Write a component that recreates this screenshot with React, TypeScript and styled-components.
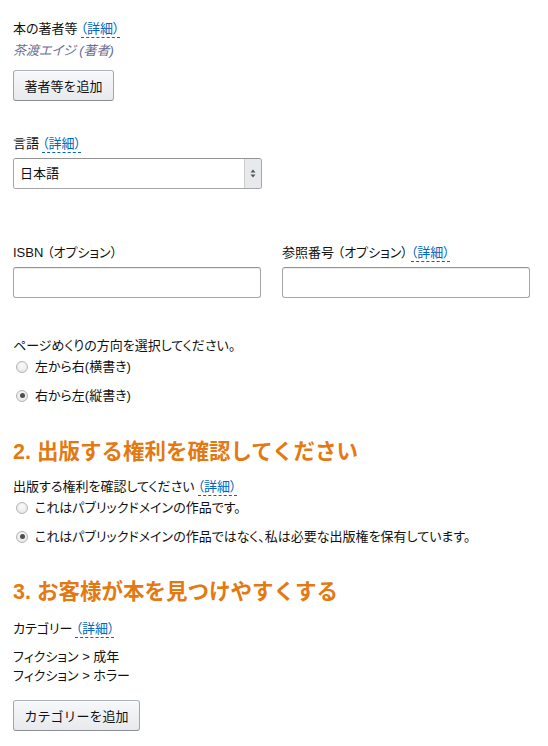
import React from "react";
import styled, { createGlobalStyle } from "styled-components";

const Global = createGlobalStyle`
  html, body { margin: 0; padding: 0; background: #fff; }
  body {
    font-family: "Liberation Sans", Arial, "Noto Sans CJK JP", sans-serif;
    font-size: 13px;
    line-height: 19px;
    color: #111;
  }
`;

const Page = styled.div`
  padding: 19px 13px 0;
  width: 548px;
  box-sizing: border-box;
  font-feature-settings: "palt";
`;

const Block = styled.div<{ $mt?: number }>`
  margin-top: ${(p) => p.$mt ?? 0}px;
`;

const Label = styled.div`
  font-size: 13px;
  line-height: 19px;
  white-space: nowrap;
`;

const Detail = styled.span`
  color: #0066c0;
  border-bottom: 1px dashed #0066c0;
  padding-bottom: 1px;
  margin-left: 3px;
`;

const Author = styled.div`
  margin-top: 3px;
  font-style: italic;
  color: #6d6d93;
`;

const Button = styled.button<{ $mt?: number }>`
  display: inline-flex;
  align-items: center;
  justify-content: center;
  margin-top: ${(p) => p.$mt ?? 0}px;
  height: 31px;
  padding: 0 10.5px;
  border: 1px solid;
  border-color: #adb1b8 #a2a6ac #8d9096;
  border-radius: 3px;
  background: linear-gradient(to bottom, #f7f8fa, #e7e9ec);
  box-shadow: inset 0 1px 0 rgba(255, 255, 255, 0.6);
  font-family: inherit;
  font-size: 13px;
  color: #111;
  font-feature-settings: normal;
  cursor: pointer;
`;

const SelectBox = styled.div`
  margin-top: 5px;
  width: 249px;
  height: 31px;
  box-sizing: border-box;
  display: flex;
  border: 1px solid #a6a6a6;
  border-top-color: #949494;
  border-radius: 3px;
  overflow: hidden;
  box-shadow: 0 1px 0 rgba(0, 0, 0, 0.07) inset;
`;

const SelectValue = styled.div`
  flex: 1;
  display: flex;
  align-items: center;
  padding-left: 6px;
  background: #fff;
`;

const ArrowBox = styled.div`
  width: 16px;
  display: flex;
  align-items: center;
  justify-content: center;
  background: #e7e9ec;
  border-left: 1px solid #cdcdcd;
`;

const InputRow = styled.div`
  margin-top: 54px;
  display: grid;
  grid-template-columns: 248px 248px;
  column-gap: 21px;
`;

const Input = styled.input`
  display: block;
  margin-top: 5px;
  width: 100%;
  height: 31px;
  box-sizing: border-box;
  border: 1px solid #a6a6a6;
  border-top-color: #949494;
  border-radius: 3px;
  box-shadow: 0 1px 0 rgba(0, 0, 0, 0.07) inset;
  background: #fff;
  padding: 3px 7px;
  font-family: inherit;
  font-size: 13px;
`;

const RadioRow = styled.div<{ $mt: number }>`
  margin-top: ${(p) => p.$mt}px;
  display: flex;
  align-items: center;
  height: 19px;
  white-space: nowrap;
`;

const RadioDot = styled.span<{ $checked?: boolean }>`
  position: relative;
  width: 12px;
  height: 12px;
  margin: 0 7px 0 3px;
  box-sizing: border-box;
  border-radius: 50%;
  border: 1px solid #b4b4b4;
  background: radial-gradient(circle at 50% 35%, #fafafa, #e2e2e2);
  flex: none;
  &::after {
    content: "";
    display: ${(p) => (p.$checked ? "block" : "none")};
    position: absolute;
    left: 2.5px;
    top: 2.5px;
    width: 5px;
    height: 5px;
    border-radius: 50%;
    background: #4e4e4e;
  }
`;

const Heading = styled.h2<{ $mt: number }>`
  margin: ${(p) => p.$mt}px 0 0;
  font-size: 21.5px;
  line-height: 24px;
  font-weight: bold;
  color: #e47911;
  white-space: nowrap;
  font-feature-settings: normal;
`;

const Radio = ({ checked, mt, children }: { checked?: boolean; mt: number; children: React.ReactNode }) => (
  <RadioRow $mt={mt}>
    <RadioDot $checked={checked} />
    <span>{children}</span>
  </RadioRow>
);

const Arrows = () => (
  <svg width="6" height="9" viewBox="0 0 6 9">
    <path d="M3 0.5 L5.5 3.5 H0.5 Z" fill="#555" />
    <path d="M3 8.5 L5.5 5.5 H0.5 Z" fill="#555" />
  </svg>
);

export default function App() {
  return (
    <>
      <Global />
      <Page>
        <Block>
          <Label>
            本の著者等<Detail>（詳細）</Detail>
          </Label>
          <Author>茶渡エイジ (著者)</Author>
          <Button $mt={10}>著者等を追加</Button>
        </Block>

        <Block $mt={33}>
          <Label>
            言語<Detail>（詳細）</Detail>
          </Label>
          <SelectBox>
            <SelectValue>日本語</SelectValue>
            <ArrowBox>
              <Arrows />
            </ArrowBox>
          </SelectBox>
        </Block>

        <InputRow>
          <div>
            <Label>ISBN （オプション）</Label>
            <Input />
          </div>
          <div>
            <Label>
              参照番号 （オプション）<Detail>（詳細）</Detail>
            </Label>
            <Input />
          </div>
        </InputRow>

        <Block $mt={38}>
          <Label>ページめくりの方向を選択してください。</Label>
          <Radio mt={2}>左から右(横書き)</Radio>
          <Radio mt={10} checked>
            右から左(縦書き)
          </Radio>
        </Block>

        <Heading $mt={35}>2. 出版する権利を確認してください</Heading>
        <Block $mt={13}>
          <Label>
            出版する権利を確認してください<Detail>（詳細）</Detail>
          </Label>
          <Radio mt={2}>これはパブリックドメインの作品です。</Radio>
          <Radio mt={10} checked>
            これはパブリックドメインの作品ではなく、私は必要な出版権を保有しています。
          </Radio>
        </Block>

        <Heading $mt={34}>3. お客様が本を見つけやすくする</Heading>
        <Block $mt={15}>
          <Label>
            カテゴリー<Detail>（詳細）</Detail>
          </Label>
        </Block>
        <Block $mt={9}>
          <Label>フィクション &gt; 成年</Label>
          <Label>フィクション &gt; ホラー</Label>
        </Block>
        <Button $mt={15}>カテゴリーを追加</Button>
      </Page>
    </>
  );
}
